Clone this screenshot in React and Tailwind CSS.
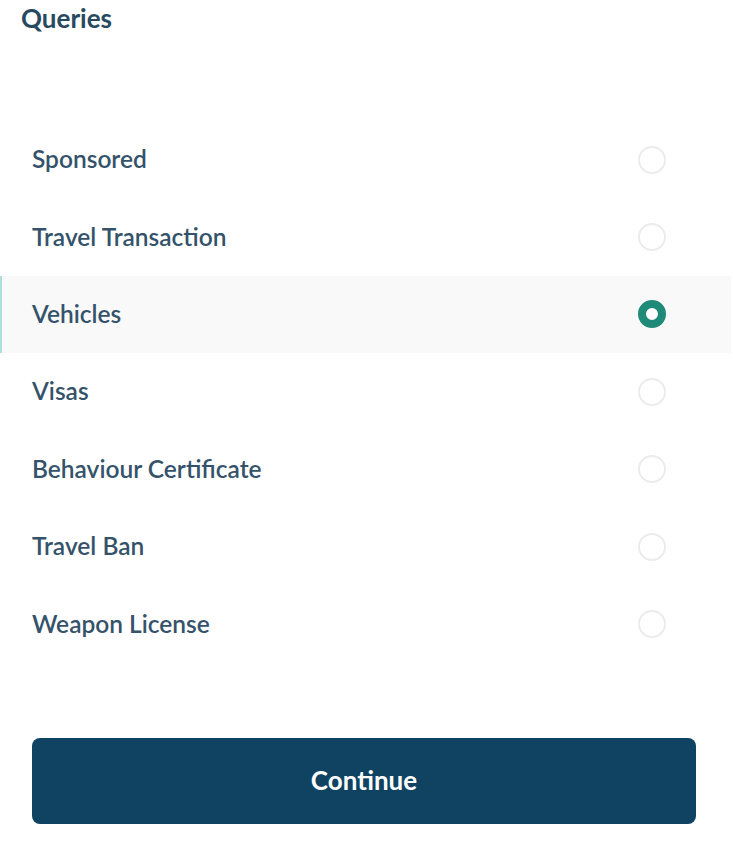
import { useState } from 'react';

const options = [
  'Sponsored',
  'Travel Transaction',
  'Vehicles',
  'Visas',
  'Behaviour Certificate',
  'Travel Ban',
  'Weapon License',
];

function Radio({ checked }) {
  if (checked) {
    return <span className="block h-[28px] w-[28px] rounded-full border-[8px] border-[#1f8a78] bg-white" />;
  }
  return <span className="block h-[28px] w-[28px] rounded-full border-2 border-[#ececec] bg-white" />;
}

export default function App() {
  const [selected, setSelected] = useState('Vehicles');

  return (
    <div className="min-h-[843px] w-[733px] bg-white font-['Lato',_'Noto_Sans',_sans-serif]">
      <h1 className="px-[21px] pt-[2px] text-[26px] font-bold leading-[32px] text-[#284a60]">Queries</h1>

      {/* Options list */}
      <ul className="mt-[87px] pr-[2px]">
        {options.map((opt) => {
          const active = opt === selected;
          return (
            <li
              key={opt}
              onClick={() => setSelected(opt)}
              className={`flex h-[77.4px] cursor-pointer items-center justify-between border-l-2 pl-[30px] pr-[65px] ${
                active ? 'border-[#aee0e0] bg-[#f9f9f9]' : 'border-transparent'
              }`}
            >
              <span className="text-[24.5px] font-semibold text-[#34536a]">{opt}</span>
              <Radio checked={active} />
            </li>
          );
        })}
      </ul>

      <div className="mt-[75px] px-[32px] pr-[37px]">
        <button className="flex h-[86px] w-full items-center justify-center rounded-[8px] bg-[#0f4361] text-[26px] font-bold text-white">
          Continue
        </button>
      </div>
    </div>
  );
}
